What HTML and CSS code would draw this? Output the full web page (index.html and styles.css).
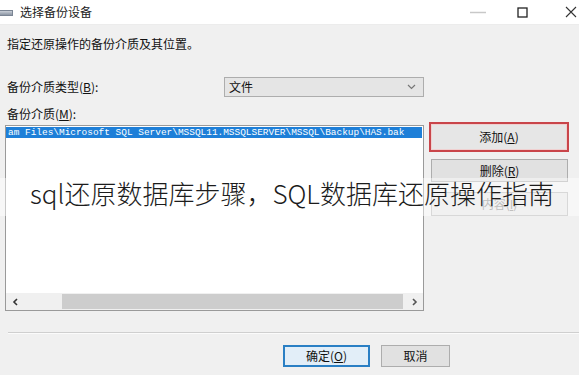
FILE: index.html
```html
<!DOCTYPE html>
<html lang="zh-CN">
<head>
<meta charset="utf-8">
<title>选择备份设备</title>
<link rel="stylesheet" href="styles.css">
</head>
<body>
<div class="window">
  <div class="titlebar">
    <span class="app-icon"></span>
    <span class="title">选择备份设备</span>
    <div class="controls">
      <span class="ctl ctl-min"><svg width="16" height="10" viewBox="0 0 16 10"><path d="M0 5.5h16" stroke="#c8c8c8" stroke-width="1.5"/></svg></span>
      <span class="ctl ctl-max"><svg width="11" height="11" viewBox="0 0 11 11"><rect x="1" y="1" width="9" height="9" fill="none" stroke="#222" stroke-width="1.3"/></svg></span>
      <span class="ctl ctl-close"><svg width="12" height="12" viewBox="0 0 12 12"><path d="M1 1L11 11M11 1L1 11" stroke="#333" stroke-width="1.1"/></svg></span>
    </div>
  </div>
  <div class="content">
    <p class="desc">指定还原操作的备份介质及其位置。</p>
    <div class="type-row">
      <label class="field-label">备份介质类型(<u>B</u>):</label>
      <div class="select">
        <span class="select-value">文件</span>
        <svg class="chevron" width="9" height="6" viewBox="0 0 9 6"><path d="M1 1L4.5 4.5L8 1" fill="none" stroke="#777" stroke-width="1.2"/></svg>
      </div>
    </div>
    <div class="media-label">备份介质(<u>M</u>):</div>
    <div class="media-row">
      <div class="listbox">
        <div class="items">
          <div class="item selected">am Files\Microsoft SQL Server\MSSQL11.MSSQLSERVER\MSSQL\Backup\HAS.bak</div>
        </div>
        <div class="hscroll">
          <span class="sb-arrow"><svg width="6" height="8" viewBox="0 0 6 8"><path d="M5 1L2 4L5 7" fill="none" stroke="#333" stroke-width="1.6"/></svg></span>
          <div class="sb-track"><div class="sb-thumb"></div></div>
          <span class="sb-arrow"><svg width="6" height="8" viewBox="0 0 6 8"><path d="M1 1L4 4L1 7" fill="none" stroke="#555" stroke-width="1.6"/></svg></span>
        </div>
      </div>
      <div class="side-buttons">
        <div class="highlight"><button class="btn btn-add">添加(<u>A</u>)</button></div>
        <button class="btn btn-side btn-remove">删除(<u>R</u>)</button>
        <button class="btn btn-side btn-contents" disabled>内容(<u>I</u>)</button>
      </div>
    </div>
  </div>
  <div class="separator"></div>
  <div class="footer">
    <button class="btn btn-ok">确定(<u>O</u>)</button>
    <button class="btn btn-cancel">取消</button>
  </div>
  <div class="caption">sql还原数据库步骤，SQL数据库还原操作指南</div>
</div>
</body>
</html>
```
FILE: styles.css
```css
* { box-sizing: border-box; }
html, body { margin: 0; padding: 0; }
body {
  width: 579px;
  height: 375px;
  overflow: hidden;
  background: #f0f0f0;
  font-family: "Noto Sans CJK SC", "Liberation Sans", sans-serif;
  font-size: 12px;
  color: #111;
}
.window {
  position: relative;
  width: 579px;
  height: 375px;
  background: #f0f0f0;
}
.titlebar {
  height: 25px;
  background: #fff;
  display: flex;
  align-items: center;
  border-bottom: 1px solid #ececec;
}
.app-icon {
  width: 13px;
  height: 6px;
  margin-top: 1px;
  background: linear-gradient(#c9ced6, #8c96a4);
  border: 1px solid #7b8594;
  border-left: none;
}
.title {
  margin-left: 7px;
  font-size: 12px;
  color: #222;
  line-height: 16px;
}
.controls {
  margin-left: auto;
  display: flex;
  align-items: center;
  height: 25px;
}
.ctl { display: flex; align-items: center; justify-content: center; }
.ctl-min { width: 16px; margin-right: 31px; }
.ctl-max { width: 11px; margin-right: 37px; }
.ctl-close { width: 12px; margin-right: 2px; }

.content { padding-left: 5px; }
.desc {
  margin: 11px 0 0 2px;
  line-height: 16px;
  font-size: 12px;
}
.type-row {
  display: flex;
  align-items: center;
  margin-top: 25px;
  height: 20px;
}
.field-label {
  width: 219px;
  padding-left: 2px;
  line-height: 16px;
}
.select {
  width: 200px;
  height: 20px;
  background: #e5e5e5;
  border: 1px solid #adadad;
  display: flex;
  align-items: center;
  padding: 0 7px 0 4px;
}
.select-value { line-height: 16px; }
.chevron { margin-left: auto; }
.media-label {
  margin-top: 9px;
  padding-left: 2px;
  line-height: 16px;
}
.media-row {
  display: flex;
  align-items: flex-start;
}
.listbox {
  margin-top: 3px;
  width: 419px;
  height: 186px;
  background: #fff;
  border: 1px solid #9a9a9a;
  display: flex;
  flex-direction: column;
}
.items { flex: 1; padding: 1px 0 0 0; }
.item {
  height: 11px;
  line-height: 11px;
  font-family: "Liberation Mono", "DejaVu Sans Mono", monospace;
  font-size: 9.45px;
  white-space: nowrap;
  overflow: hidden;
  padding-left: 2px;
}
.item.selected {
  background: #1e7fd8;
  color: #fff;
  width: 416px;
}
.hscroll {
  height: 17px;
  display: flex;
  align-items: center;
  background: #f0f0f0;
}
.sb-arrow {
  width: 17px;
  height: 17px;
  display: flex;
  align-items: center;
  justify-content: center;
}
.sb-track {
  flex: 1;
  height: 15px;
  display: flex;
}
.sb-thumb {
  margin-left: 39px;
  width: 341px;
  height: 15px;
  background: #cdcdcd;
}
.side-buttons {
  width: 140px;
  margin-left: 5px;
  display: flex;
  flex-direction: column;
}
.highlight {
  height: 30px;
  border: 2px solid #c9454a;
  display: flex;
}
.btn {
  font-family: "Noto Sans CJK SC", "Liberation Sans", sans-serif;
  font-size: 12px;
  color: #111;
  background: #e1e1e1;
  border: 1px solid #adadad;
  padding: 0;
  line-height: 16px;
}
.btn u { text-underline-offset: 1px; }
.btn-add {
  flex: 1;
  background: #e6e6e6;
  border-color: #f0d0d0;
}
.btn-side {
  margin-left: 2px;
  width: 137px;
}
.btn-remove {
  margin-top: 7px;
  height: 23px;
}
.btn-contents {
  margin-top: 10px;
  height: 24px;
  color: #8a8a8a;
  background: #e6e6e6;
  border-color: #b8b8b8;
}
.separator {
  margin: 21px 0 0 8px;
  height: 2px;
  border-top: 1px solid #cfcfcf;
  border-bottom: 1px solid #fbfbfb;
}
.footer {
  display: flex;
  gap: 11px;
  padding-left: 283px;
  margin-top: 11px;
}
.btn-ok {
  width: 87px;
  height: 22px;
  border: 2px solid #2a7fc4;
  background: #e2eef8;
}
.btn-cancel {
  width: 69px;
  height: 22px;
}
.caption {
  position: absolute;
  left: 0;
  right: 0;
  top: 178px;
  height: 38px;
  background: rgba(255, 255, 255, 0.45);
  padding-left: 30px;
  font-family: "Noto Sans CJK SC", sans-serif;
  font-weight: 300;
  font-size: 26px;
  line-height: 30px;
  color: #1c1c1c;
  white-space: nowrap;
}
```
